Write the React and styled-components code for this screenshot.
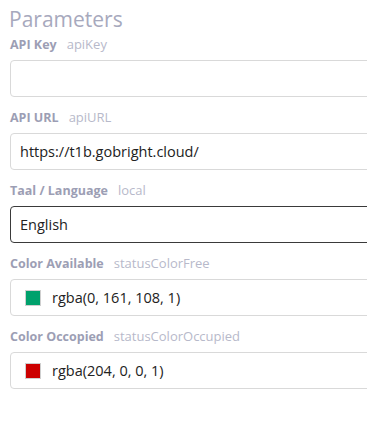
import styled, { createGlobalStyle } from "styled-components";

const fields = [
  { name: "API Key", key: "apiKey", value: "" },
  { name: "API URL", key: "apiURL", value: "https://t1b.gobright.cloud/" },
  { name: "Taal / Language", key: "local", value: "English", active: true },
  { name: "Color Available", key: "statusColorFree", value: "rgba(0, 161, 108, 1)", swatch: "rgb(0, 161, 108)" },
  { name: "Color Occopied", key: "statusColorOccupied", value: "rgba(204, 0, 0, 1)", swatch: "rgb(204, 0, 0)" },
];

function App() {
  return (
    <>
      <GlobalStyle />
      <Panel>
        <Title>Parameters</Title>
        {fields.map((f) => (
          <Field key={f.key}>
            <LabelRow>
              <Name>{f.name}</Name>
              <Key>{f.key}</Key>
            </LabelRow>
            <Box $active={f.active} $color={!!f.swatch}>
              {f.swatch && <Swatch style={{ background: f.swatch }} />}
              <Value>{f.value}</Value>
            </Box>
          </Field>
        ))}
      </Panel>
    </>
  );
}

const GlobalStyle = createGlobalStyle`
  body {
    margin: 0;
    background: #fff;
    overflow: hidden;
    font-family: "Open Sans", "Liberation Sans", sans-serif;
  }
`;

const Panel = styled.div`
  display: flex;
  flex-direction: column;
  width: 367px;
  box-sizing: border-box;
  overflow: hidden;
  padding: 5px 0 0 10px;
`;

const Title = styled.h2`
  margin: 0 0 0 -1px;
  font-size: 21px;
  line-height: 28px;
  font-weight: 500;
  color: #a7a9bd;
`;

const Field = styled.div`
  display: flex;
  flex-direction: column;
  margin-top: 4px;
  & + & {
    margin-top: 13px;
  }
`;

const LabelRow = styled.div`
  display: flex;
  align-items: baseline;
  gap: 10px;
  height: 14px;
  line-height: 14px;
  margin-bottom: 9px;
`;

const Name = styled.span`
  font-size: 12.5px;
  font-weight: 700;
  color: #9c9eb4;
`;

const Key = styled.span`
  font-size: 13px;
  color: #b7b9ca;
`;

const Box = styled.div`
  display: flex;
  align-items: center;
  gap: 11px;
  width: 420px;
  flex-shrink: 0;
  height: 37px;
  box-sizing: border-box;
  padding: 0 ${(p) => (p.$color ? "14px" : "9px")};
  border: 1px solid ${(p) => (p.$active ? "#3a3a3a" : "#d9d9d9")};
  border-radius: 4px;
`;

const Swatch = styled.span`
  width: 16px;
  height: 16px;
  box-sizing: border-box;
  border: 1px solid #cfcfcf;
  flex-shrink: 0;
`;

const Value = styled.span`
  font-size: 14.5px;
  color: #222;
`;

export default App;
